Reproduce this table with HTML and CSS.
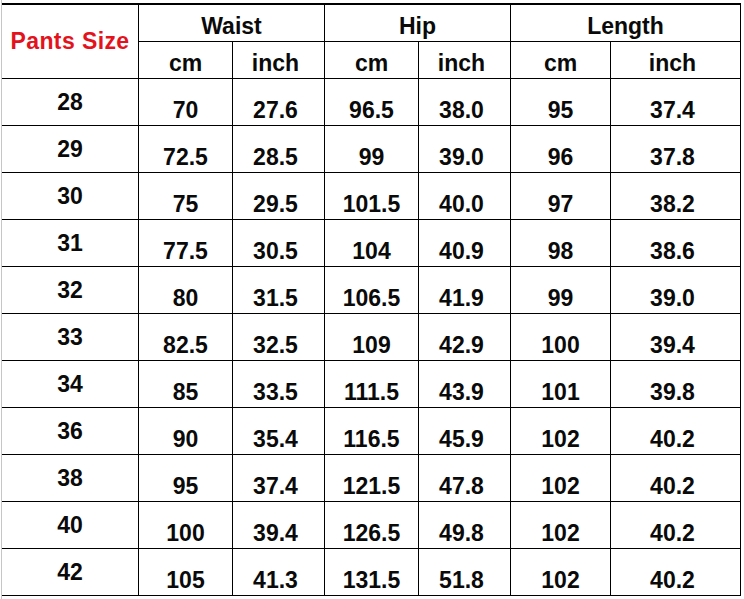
FILE: index.html
```html
<!DOCTYPE html>
<html lang="en">
<head>
<meta charset="utf-8">
<title>Pants Size Chart</title>
<link rel="stylesheet" href="styles.css">
</head>
<body>
<div class="sheet">
  <div class="chart">
    <div class="cell title">Pants Size</div>
    <div class="cell head span2">Waist</div>
    <div class="cell head span2">Hip</div>
    <div class="cell head span2">Length</div>
    <div class="cell">cm</div><div class="cell inch">inch</div>
    <div class="cell">cm</div><div class="cell inch">inch</div>
    <div class="cell">cm</div><div class="cell inch">inch</div>

    <div class="cell size">28</div><div class="cell">70</div><div class="cell inch">27.6</div><div class="cell">96.5</div><div class="cell inch">38.0</div><div class="cell">95</div><div class="cell inch">37.4</div>
    <div class="cell size">29</div><div class="cell">72.5</div><div class="cell inch">28.5</div><div class="cell">99</div><div class="cell inch">39.0</div><div class="cell">96</div><div class="cell inch">37.8</div>
    <div class="cell size">30</div><div class="cell">75</div><div class="cell inch">29.5</div><div class="cell">101.5</div><div class="cell inch">40.0</div><div class="cell">97</div><div class="cell inch">38.2</div>
    <div class="cell size">31</div><div class="cell">77.5</div><div class="cell inch">30.5</div><div class="cell">104</div><div class="cell inch">40.9</div><div class="cell">98</div><div class="cell inch">38.6</div>
    <div class="cell size">32</div><div class="cell">80</div><div class="cell inch">31.5</div><div class="cell">106.5</div><div class="cell inch">41.9</div><div class="cell">99</div><div class="cell inch">39.0</div>
    <div class="cell size">33</div><div class="cell">82.5</div><div class="cell inch">32.5</div><div class="cell">109</div><div class="cell inch">42.9</div><div class="cell">100</div><div class="cell inch">39.4</div>
    <div class="cell size">34</div><div class="cell">85</div><div class="cell inch">33.5</div><div class="cell">111.5</div><div class="cell inch">43.9</div><div class="cell">101</div><div class="cell inch">39.8</div>
    <div class="cell size">36</div><div class="cell">90</div><div class="cell inch">35.4</div><div class="cell">116.5</div><div class="cell inch">45.9</div><div class="cell">102</div><div class="cell inch">40.2</div>
    <div class="cell size">38</div><div class="cell">95</div><div class="cell inch">37.4</div><div class="cell">121.5</div><div class="cell inch">47.8</div><div class="cell">102</div><div class="cell inch">40.2</div>
    <div class="cell size">40</div><div class="cell">100</div><div class="cell inch">39.4</div><div class="cell">126.5</div><div class="cell inch">49.8</div><div class="cell">102</div><div class="cell inch">40.2</div>
    <div class="cell size">42</div><div class="cell">105</div><div class="cell inch">41.3</div><div class="cell">131.5</div><div class="cell inch">51.8</div><div class="cell">102</div><div class="cell inch">40.2</div>
  </div>
</div>
</body>
</html>
```

FILE: styles.css
```css
html, body {
  margin: 0;
  padding: 0;
  background: #ffffff;
}

body {
  font-family: "Liberation Sans", Arial, sans-serif;
  overflow: hidden;
}

.sheet {
  margin-left: 1px;
  border-left: 1px solid #c6c6c6;
  height: 599px;
  padding-top: 3px;
  box-sizing: border-box;
}

.chart {
  display: grid;
  grid-template-columns: 136px 93px 91px 93px 91px 99px 129px;
  grid-template-rows: 36px 36px repeat(11, 46px);
  gap: 1px;
  width: max-content;
  background: #000;
  border-top: 2px solid #000;
  border-right: 1px solid #000;
  border-bottom: 1px solid #000;
}

.cell {
  background: #fff;
  display: flex;
  align-items: flex-end;
  justify-content: center;
  padding-bottom: 3px;
  box-sizing: border-box;
  font-size: 23px;
  font-weight: bold;
  line-height: 1;
  color: #0a0a0a;
}

.inch {
  padding-right: 6px;
}

.span2 {
  grid-column: span 2;
}

.title {
  grid-row: span 2;
  align-items: center;
  padding-bottom: 0;
  font-size: 23px;
  letter-spacing: 0.4px;
  color: #e3121b;
}

.size {
  align-items: center;
  padding-bottom: 0;
}
```
